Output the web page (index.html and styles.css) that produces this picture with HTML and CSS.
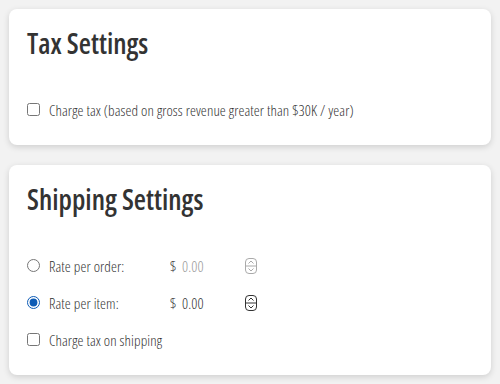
FILE: index.html
```html
<!DOCTYPE html>
<html lang="en">
<head>
    <meta charset="UTF-8">
    <meta name="viewport" content="width=device-width, initial-scale=1.0">
    <title>Settings</title>
    <link rel="stylesheet" href="styles.css">
</head>
<body>
    <div class="card">
        <h2>Tax Settings</h2>
        <label class="row">
            <input type="checkbox" id="charge-tax">
            <span>Charge tax (based on gross revenue greater than $30K / year)</span>
        </label>
    </div>

    <div class="card">
        <h2>Shipping Settings</h2>
        <div class="row">
            <input type="radio" name="rate" id="rate-order">
            <label for="rate-order" class="rate-label">Rate per order:</label>
            <span class="price disabled">
                <span class="currency">$</span>
                <input type="text" class="amount" value="0.00" disabled>
                <svg class="spin" width="12" height="16" viewBox="0 0 12 16">
                    <rect x="0.5" y="0.5" width="11" height="15" rx="3.5" fill="none" stroke="currentColor"/>
                    <path d="M0.5 8h11" stroke="currentColor"/>
                    <path d="M3.5 5.5 6 3l2.5 2.5M3.5 10.5 6 13l2.5-2.5" fill="none" stroke="currentColor"/>
                </svg>
            </span>
        </div>
        <div class="row">
            <input type="radio" name="rate" id="rate-item" checked>
            <label for="rate-item" class="rate-label">Rate per item:</label>
            <span class="price">
                <span class="currency">$</span>
                <input type="text" class="amount" value="0.00">
                <svg class="spin" width="12" height="16" viewBox="0 0 12 16">
                    <rect x="0.5" y="0.5" width="11" height="15" rx="3.5" fill="none" stroke="currentColor"/>
                    <path d="M0.5 8h11" stroke="currentColor"/>
                    <path d="M3.5 5.5 6 3l2.5 2.5M3.5 10.5 6 13l2.5-2.5" fill="none" stroke="currentColor"/>
                </svg>
            </span>
        </div>
        <label class="row">
            <input type="checkbox" id="tax-shipping">
            <span>Charge tax on shipping</span>
        </label>
    </div>
</body>
</html>
```

FILE: styles.css
```css
body {
    font-family: "Open Sans", "Roboto", sans-serif;
    font-stretch: 75%;
    background-color: #f2f2f2;
    color: #333;
    margin: 0;
    padding: 9px;
    display: flex;
    flex-direction: column;
    gap: 20px;
}

.card {
    background: white;
    border-radius: 8px;
    box-shadow: 0 2px 6px rgba(0, 0, 0, 0.15);
    padding: 14px 18px 17px 18px;
}

h2 {
    font-size: 28px;
    font-weight: 600;
    line-height: 40px;
    margin: 0 0 28px 0;
    color: #333;
}

.row {
    display: flex;
    align-items: center;
    height: 37px;
    font-size: 15px;
    font-weight: 300;
    letter-spacing: 0.1px;
    color: #333;
}

.row input[type="checkbox"],
.row input[type="radio"] {
    width: 13px;
    height: 13px;
    margin: 0 9px 0 0;
    accent-color: #0d5bb5;
}

.rate-label {
    width: 121px;
}

.price {
    display: flex;
    align-items: center;
}

.currency {
    width: 12px;
    color: #333;
}

.amount {
    width: 63px;
    border: none;
    padding: 0;
    font: inherit;
    letter-spacing: inherit;
    color: #333;
    background: transparent;
}

.spin {
    color: #333;
}

.price.disabled .amount {
    color: #999;
}

.price.disabled .spin {
    color: #aaa;
}
```
